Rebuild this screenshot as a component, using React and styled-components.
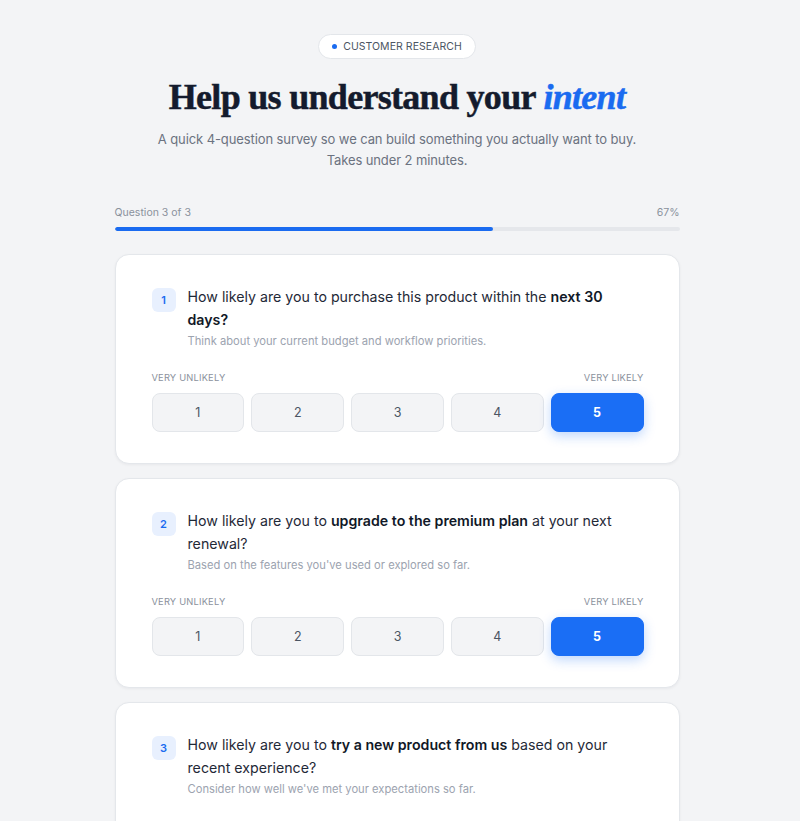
import styled, { createGlobalStyle } from "styled-components"
import { useState } from "react"

const GlobalStyle = createGlobalStyle`
  * { box-sizing: border-box; }
  body {
    margin: 0;
    background: #f3f4f6;
    font-family: Inter, "Noto Sans", sans-serif;
    color: #111827;
  }
`

const questions = [
  {
    parts: ["How likely are you to purchase this product within the ", <b key="b">next 30 days?</b>],
    hint: "Think about your current budget and workflow priorities.",
  },
  {
    parts: ["How likely are you to ", <b key="b">upgrade to the premium plan</b>, " at your next renewal?"],
    hint: "Based on the features you've used or explored so far.",
  },
  {
    parts: ["How likely are you to ", <b key="b">try a new product from us</b>, " based on your recent experience?"],
    hint: "Consider how well we've met your expectations so far.",
  },
]

export default function App() {
  const [answers, setAnswers] = useState([5, 5, null])

  const pick = (qi, v) => {
    const next = [...answers]
    next[qi] = v
    setAnswers(next)
  }

  return (
    <>
      <GlobalStyle />
      <Page>
        <Header>
          <Pill>
            <Dot />
            CUSTOMER RESEARCH
          </Pill>
          <Title>
            Help us understand your <em>intent</em>
          </Title>
          <Subtitle>
            A quick 4-question survey so we can build something you actually want to buy.
            <br />
            Takes under 2 minutes.
          </Subtitle>
        </Header>

        <Progress>
          <ProgressLabels>
            <span>Question 3 of 3</span>
            <span>67%</span>
          </ProgressLabels>
          <Track>
            <Fill style={{ width: "67%" }} />
          </Track>
        </Progress>

        <CardList>
          {questions.map((q, qi) => (
            <Card key={qi}>
              <QuestionRow>
                <Num>{qi + 1}</Num>
                <div>
                  <QuestionText>{q.parts}</QuestionText>
                  <Hint>{q.hint}</Hint>
                </div>
              </QuestionRow>
              <ScaleLabels>
                <span>Very unlikely</span>
                <span>Very likely</span>
              </ScaleLabels>
              <Scale>
                {[1, 2, 3, 4, 5].map((v) => (
                  <RateButton key={v} $active={answers[qi] === v} onClick={() => pick(qi, v)}>
                    {v}
                  </RateButton>
                ))}
              </Scale>
            </Card>
          ))}
        </CardList>
      </Page>
    </>
  )
}

const Page = styled.div`
    width: 565px;
    margin: 0 auto;
    padding: 34px 0 40px;
    position: relative;
    left: -3px;
`

const Header = styled.header`
    display: flex;
    flex-direction: column;
    align-items: center;
    text-align: center;
`

const Pill = styled.div`
    display: inline-flex;
    align-items: center;
    gap: 6px;
    height: 25px;
    padding: 0 13px;
    background: #ffffff;
    border: 1px solid #e3e6ea;
    border-radius: 999px;
    font-size: 10.5px;
    font-weight: 400;
    letter-spacing: 0.05px;
    color: #4b5563;
`

const Dot = styled.span`
    width: 5px;
    height: 5px;
    border-radius: 50%;
    background: #1a6bf0;
`

const Title = styled.h1`
    margin: 17px 0 0;
    font-family: "Liberation Serif", "DejaVu Serif", serif;
    font-size: 36px;
    line-height: 42px;
    font-weight: 700;
    letter-spacing: -0.7px;
    color: #141b2d;
    -webkit-text-stroke: 0.5px #141b2d;
    em {
        color: #1a6bf0;
        font-style: italic;
        -webkit-text-stroke: 0.5px #1a6bf0;
    }
`

const Subtitle = styled.p`
    margin: 11px 0 0;
    font-size: 13px;
    line-height: 21px;
    letter-spacing: -0.1px;
    color: #6b7280;
`

const Progress = styled.div`
    margin-top: 35px;
`

const ProgressLabels = styled.div`
    display: flex;
    justify-content: space-between;
    font-size: 10.5px;
    line-height: 14px;
    color: #8a919c;
`

const Track = styled.div`
    margin-top: 7px;
    height: 4px;
    border-radius: 2px;
    background: #e5e7eb;
    overflow: hidden;
`

const Fill = styled.div`
    height: 100%;
    background: #1a6bf0;
    border-radius: 2px;
`

const CardList = styled.div`
    margin-top: 23px;
    display: flex;
    flex-direction: column;
    gap: 14px;
`

const Card = styled.section`
    background: #ffffff;
    border: 1px solid #e4e7eb;
    border-radius: 14px;
    padding: 30px 35px 31px 36px;
    box-shadow: 0 1px 3px rgba(17, 24, 39, 0.05);
`

const QuestionRow = styled.div`
    display: flex;
    align-items: flex-start;
    gap: 12px;
`

const Num = styled.span`
    flex: none;
    width: 24px;
    height: 24px;
    margin-top: 3px;
    border-radius: 6px;
    background: #e8f0fe;
    color: #1a6bf0;
    font-size: 11px;
    font-weight: 600;
    display: flex;
    align-items: center;
    justify-content: center;
`

const QuestionText = styled.p`
    margin: 0;
    font-size: 14.2px;
    line-height: 23px;
    color: #1f2937;
    b {
        font-weight: 600;
        color: #111827;
    }
`

const Hint = styled.p`
    margin: 1px 0 0;
    font-size: 11.2px;
    line-height: 18px;
    color: #9ca3af;
`

const ScaleLabels = styled.div`
    margin-top: 21px;
    display: flex;
    justify-content: space-between;
    font-size: 9.3px;
    line-height: 14px;
    letter-spacing: 0.2px;
    text-transform: uppercase;
    color: #8a919c;
`

const Scale = styled.div`
    margin-top: 8px;
    display: grid;
    grid-template-columns: repeat(5, 1fr);
    gap: 7px;
`

const RateButton = styled.button`
    height: 39px;
    border-radius: 8px;
    font-family: inherit;
    font-size: 12.5px;
    cursor: pointer;
    border: 1px solid ${(p) => (p.$active ? "#1a6ef5" : "#e3e6ea")};
    background: ${(p) => (p.$active ? "#1a6ef5" : "#f3f4f6")};
    color: ${(p) => (p.$active ? "#ffffff" : "#4b5563")};
    font-weight: ${(p) => (p.$active ? 700 : 400)};
    box-shadow: ${(p) => (p.$active ? "0 4px 12px rgba(26, 110, 245, 0.28)" : "none")};
`
